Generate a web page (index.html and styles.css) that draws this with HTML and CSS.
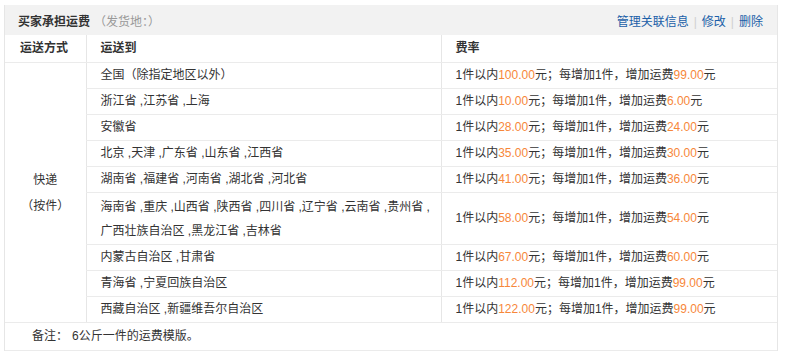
FILE: index.html
```html
<!DOCTYPE html>
<html lang="zh-CN">
<head>
<meta charset="utf-8">
<title>运费模版</title>
<link rel="stylesheet" href="styles.css">
</head>
<body>
<div class="box">
  <div class="bar">
    <div class="title"><b>买家承担运费</b><span class="from">（发货地：）</span></div>
    <div class="links"><a href="#">管理关联信息</a><span class="sep">|</span><a href="#">修改</a><span class="sep">|</span><a href="#">删除</a></div>
  </div>
  <table class="rates">
    <colgroup><col class="c1"><col class="c2"><col class="c3"></colgroup>
    <thead>
      <tr><th class="first">运送方式</th><th>运送到</th><th>费率</th></tr>
    </thead>
    <tbody>
      <tr><td class="mode" rowspan="9">快递<br>（按件）</td><td>全国（除指定地区以外）</td><td class="fee">1件以内<em>100.00</em>元；每增加1件，增加运费<em>99.00</em>元</td></tr>
      <tr><td>浙江省 ,江苏省 ,上海</td><td class="fee">1件以内<em>10.00</em>元；每增加1件，增加运费<em>6.00</em>元</td></tr>
      <tr><td>安徽省</td><td class="fee">1件以内<em>28.00</em>元；每增加1件，增加运费<em>24.00</em>元</td></tr>
      <tr><td>北京 ,天津 ,广东省 ,山东省 ,江西省</td><td class="fee">1件以内<em>35.00</em>元；每增加1件，增加运费<em>30.00</em>元</td></tr>
      <tr><td>湖南省 ,福建省 ,河南省 ,湖北省 ,河北省</td><td class="fee">1件以内<em>41.00</em>元；每增加1件，增加运费<em>36.00</em>元</td></tr>
      <tr><td class="two">海南省 ,重庆 ,山西省 ,陕西省 ,四川省 ,辽宁省 ,云南省 ,贵州省 ,<br>广西壮族自治区 ,黑龙江省 ,吉林省</td><td class="fee">1件以内<em>58.00</em>元；每增加1件，增加运费<em>54.00</em>元</td></tr>
      <tr><td>内蒙古自治区 ,甘肃省</td><td class="fee">1件以内<em>67.00</em>元；每增加1件，增加运费<em>60.00</em>元</td></tr>
      <tr><td>青海省 ,宁夏回族自治区</td><td class="fee">1件以内<em>112.00</em>元；每增加1件，增加运费<em>99.00</em>元</td></tr>
      <tr><td>西藏自治区 ,新疆维吾尔自治区</td><td class="fee">1件以内<em>122.00</em>元；每增加1件，增加运费<em>99.00</em>元</td></tr>
      <tr><td class="note" colspan="3">备注：<span class="note-text">6公斤一件的运费模版。</span></td></tr>
    </tbody>
  </table>
</div>
</body>
</html>
```
FILE: styles.css
```css
html, body {
  margin: 0;
  padding: 0;
  background: #fff;
}
body {
  font-family: "Liberation Sans", "Noto Sans CJK SC", sans-serif;
  font-size: 12px;
  color: #333;
}
.box {
  margin: 5px 0 0 4px;
  width: 772px;
  border-left: 1px solid #e6e6e6;
  border-right: 1px solid #e6e6e6;
}
.bar {
  height: 30px;
  background: #f2f2f2;
  padding: 0 14px 0 13px;
  display: flex;
  align-items: center;
  justify-content: space-between;
}
.title b {
  font-weight: bold;
  color: #333;
}
.from {
  color: #999;
  margin-left: 4px;
}
.links a {
  color: #1a5fa8;
  text-decoration: none;
}
.sep {
  color: #d0d0d0;
  margin: 0 5px;
}
.rates {
  width: 100%;
  border-collapse: collapse;
  table-layout: fixed;
}
.c1 { width: 81px; }
.c2 { width: 355px; }
.rates th {
  text-align: left;
  font-weight: bold;
  line-height: 27px;
  padding: 0 0 0 14px;
  border-bottom: 1px solid #ebebeb;
  border-left: 1px solid #e6e6e6;
}
.rates th.first {
  padding-left: 15px;
  border-left: none;
}
.rates td {
  line-height: 25px;
  padding: 0 0 0 14px;
  border-bottom: 1px solid #ebebeb;
  border-left: 1px solid #e6e6e6;
  vertical-align: middle;
  white-space: nowrap;
}
.rates td.mode {
  text-align: center;
  padding: 0;
  line-height: 26px;
  border-left: none;
}
.rates td.two {
  line-height: 24px;
  padding-top: 2px;
  padding-bottom: 1px;
}
.rates td.note {
  border-left: none;
  line-height: 27px;
  padding-left: 27px;
}
.note-text {
  margin-left: 4px;
}
.fee em {
  font-style: normal;
  color: #f7873a;
}
```
